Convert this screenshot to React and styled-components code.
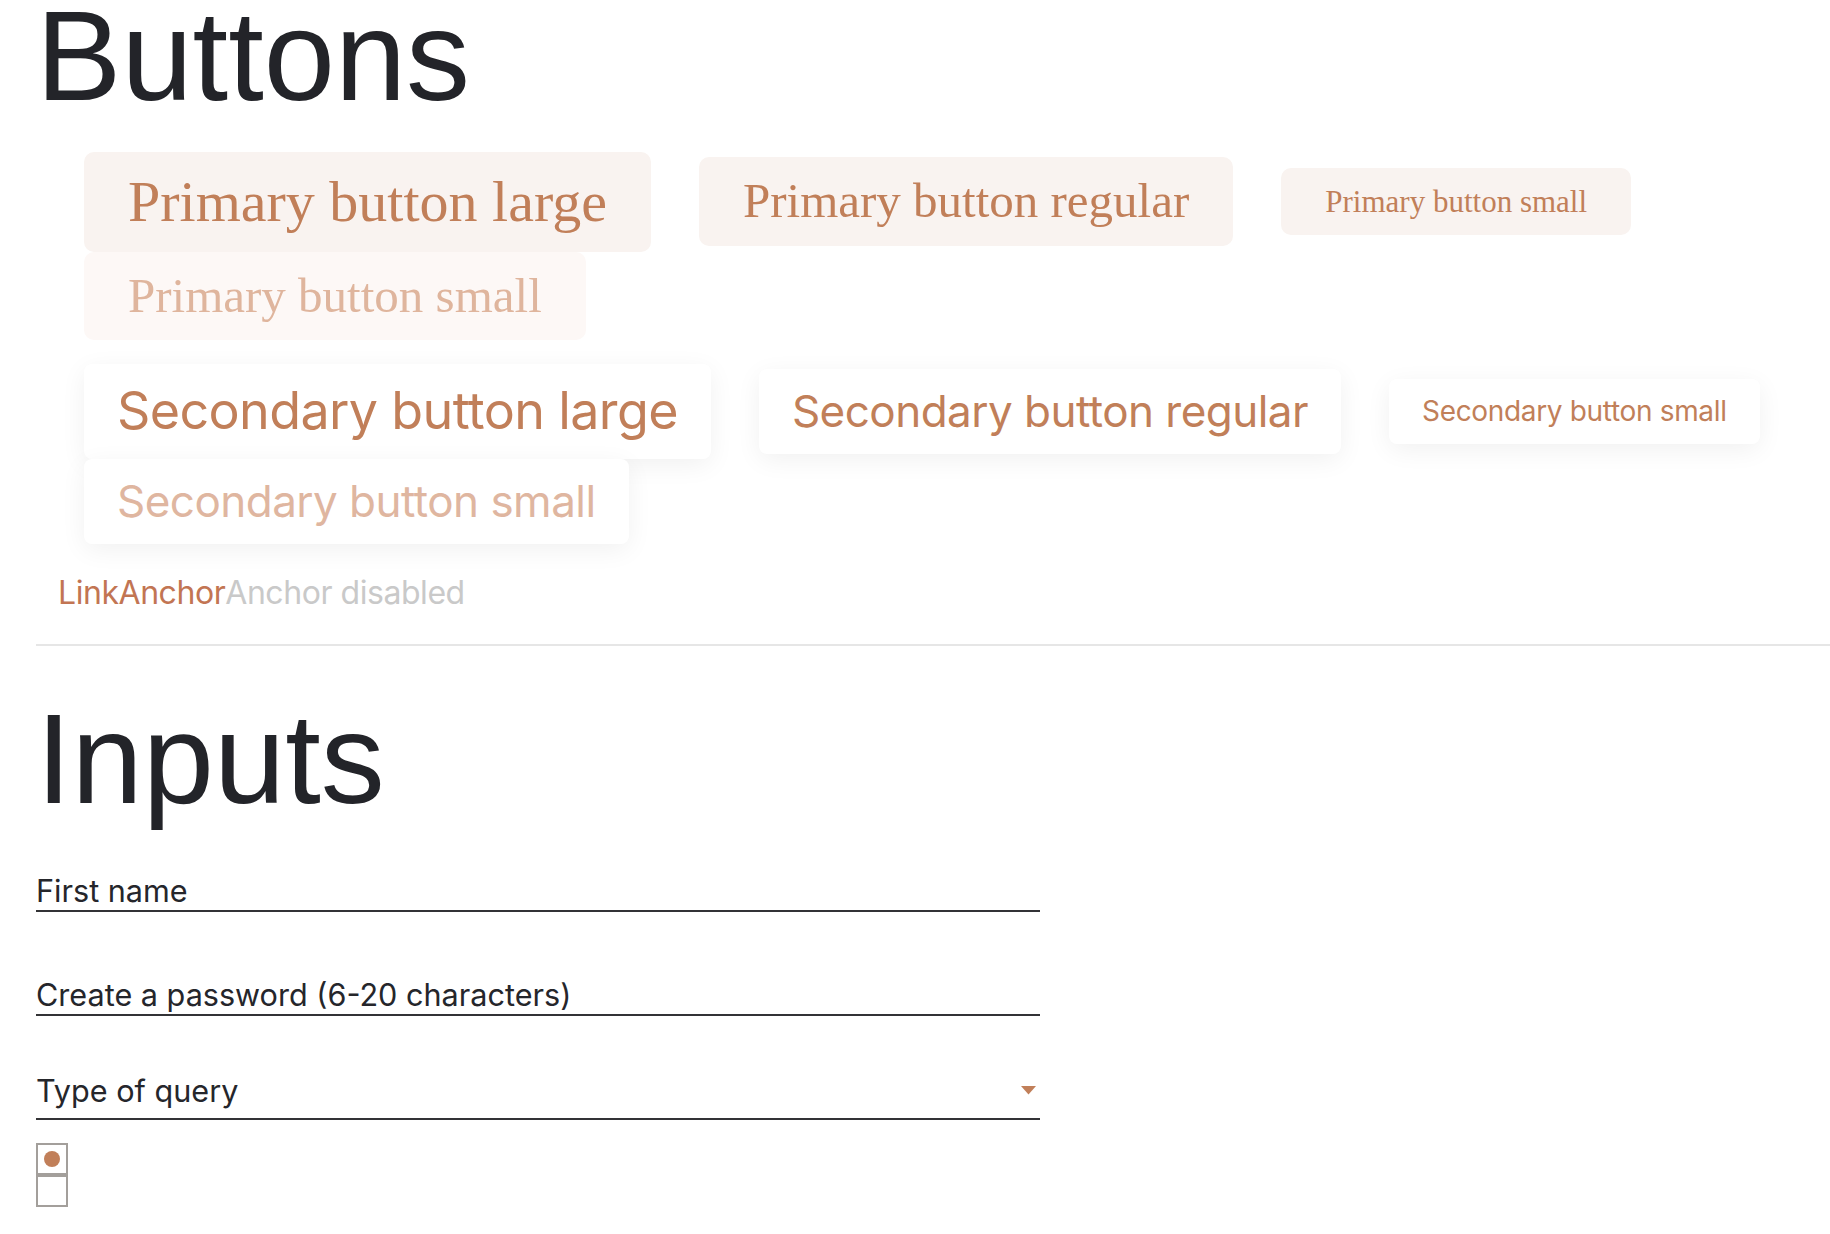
import React from "react";
import styled, { createGlobalStyle, css } from "styled-components";

const GlobalStyle = createGlobalStyle`
  html, body { margin: 0; padding: 0; background: #ffffff; }
  body { font-family: Inter, "Liberation Sans", sans-serif; color: #25262b; }
  * { box-sizing: border-box; }
`;

const COPPER = "#c17f59";
const COPPER_LIGHT = "#dfb59d";

const Page = styled.main`
  padding: 0 0 40px 36px;
  width: 100%;
`;

const Heading = styled.h1`
  margin: 0;
  font-family: "Liberation Sans", Arial, sans-serif;
  font-weight: 400;
  font-size: 128px;
  line-height: 112px;
  color: #232429;
  margin-top: ${(p) => p.$top || 0}px;
`;

const ButtonRow = styled.div`
  display: flex;
  flex-wrap: wrap;
  align-items: center;
  column-gap: 48px;
  row-gap: 0;
  padding-left: 48px;
  margin-top: ${(p) => p.$top || 0}px;
`;

const primarySizes = {
  large: 58,
  regular: 49,
  small: 31,
};

const secondarySizes = {
  large: 52,
  regular: 44,
  small: 28,
};

const Button = styled.button`
  border: none;
  cursor: pointer;
  line-height: 1.2;
  white-space: nowrap;
  ${(p) =>
    p.$variant === "primary"
      ? css`
          font-family: "Liberation Serif", "Times New Roman", serif;
          font-size: ${primarySizes[p.$size]}px;
          padding: 15px 44px;
          border-radius: 10px;
          background: ${p.disabled ? "#fdf8f6" : "#f9f3f0"};
          color: ${p.disabled ? COPPER_LIGHT : COPPER};
        `
      : css`
          font-family: Inter, "Liberation Sans", sans-serif;
          font-size: ${secondarySizes[p.$size]}px;
          letter-spacing: -0.012em;
          padding: 16px 33px;
          border-radius: 8px;
          background: #ffffff;
          box-shadow: 0 6px 26px rgba(0, 0, 0, 0.06);
          color: ${p.disabled ? "#dfb6a0" : COPPER};
        `}
  &:disabled {
    cursor: default;
  }
`;

const LinkRow = styled.div`
  display: flex;
  padding-left: 22px;
  margin-top: 30px;
  font-family: Inter, "Liberation Sans", sans-serif;
  font-size: 32px;
  letter-spacing: -0.014em;
  line-height: 1.2;
`;

const Anchor = styled.a`
  color: ${(p) => (p.$disabled ? "#c9c9c9" : "#c27553")};
  text-decoration: none;
  cursor: ${(p) => (p.$disabled ? "default" : "pointer")};
`;

const Divider = styled.hr`
  margin: 32px 0 0 0;
  border: none;
  height: 2px;
  background: #e6e6e6;
`;

const Form = styled.form`
  display: flex;
  flex-direction: column;
  width: 1004px;
  margin-top: 50px;
`;

const fieldText = css`
  font-family: Inter, "Liberation Sans", sans-serif;
  font-size: 30.6px;
  line-height: 36px;
  color: #25262b;
`;

const TextInput = styled.input`
  display: block;
  width: 100%;
  border: none;
  border-bottom: 2px solid #333336;
  padding: 8px 0 1px 0;
  margin-top: ${(p) => p.$top || 0}px;
  ${fieldText}
  height: 47px;
  background: transparent;
  outline: none;
  &::placeholder {
    color: #25262b;
    opacity: 1;
  }
`;

const SelectBox = styled.div`
  display: flex;
  align-items: center;
  justify-content: space-between;
  margin-top: 57px;
  padding: 0 4px 9px 0;
  border-bottom: 2px solid #333336;
  ${fieldText}
  cursor: pointer;
`;

const CheckStack = styled.div`
  display: flex;
  flex-direction: column;
  margin-top: 23px;
`;

const CheckBox = styled.div`
  width: 32px;
  height: 32px;
  border: 2px solid #a39f9b;
  display: flex;
  align-items: center;
  justify-content: center;
`;

const Dot = styled.span`
  width: 16px;
  height: 16px;
  border-radius: 50%;
  background: ${COPPER};
`;

const Caret = () => (
  <svg width="15" height="9" viewBox="0 0 15 9" aria-hidden="true">
    <path d="M0 0 H15 L7.5 8.5 Z" fill={COPPER} />
  </svg>
);

export default function App() {
  return (
    <>
      <GlobalStyle />
      <Page>
        <Heading>Buttons</Heading>
        <ButtonRow $top={40}>
          <Button $variant="primary" $size="large">Primary button large</Button>
          <Button $variant="primary" $size="regular">Primary button regular</Button>
          <Button $variant="primary" $size="small">Primary button small</Button>
          <Button $variant="primary" $size="regular" disabled>Primary button small</Button>
        </ButtonRow>
        <ButtonRow $top={24}>
          <Button $variant="secondary" $size="large">Secondary button large</Button>
          <Button $variant="secondary" $size="regular">Secondary button regular</Button>
          <Button $variant="secondary" $size="small">Secondary button small</Button>
          <Button $variant="secondary" $size="regular" disabled>Secondary button small</Button>
        </ButtonRow>
        <LinkRow>
          <Anchor href="#">LinkAnchor</Anchor>
          <Anchor $disabled>Anchor disabled</Anchor>
        </LinkRow>
        <Divider />
        <Heading $top={57}>Inputs</Heading>
        <Form onSubmit={(e) => e.preventDefault()}>
          <TextInput type="text" placeholder="First name" />
          <TextInput type="password" placeholder="Create a password (6-20 characters)" $top={57} />
          <SelectBox role="combobox" aria-expanded="false">
            <span>Type of query</span>
            <Caret />
          </SelectBox>
          <CheckStack>
            <CheckBox role="radio" aria-checked="true"><Dot /></CheckBox>
            <CheckBox role="radio" aria-checked="false" />
          </CheckStack>
        </Form>
      </Page>
    </>
  );
}
